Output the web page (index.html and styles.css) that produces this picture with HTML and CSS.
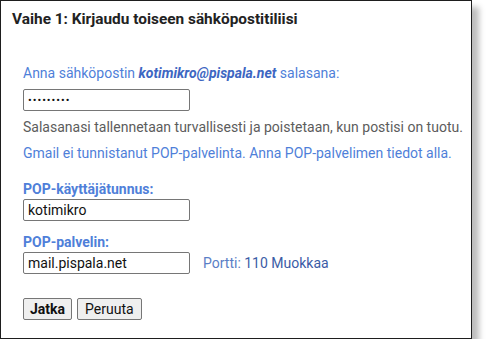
FILE: index.html
```html
<!DOCTYPE html>
<html lang="fi">
<head>
    <meta charset="UTF-8">
    <title>Vaihe 1</title>
    <link rel="stylesheet" href="styles.css">
</head>
<body>
    <div class="panel">
        <h2 class="title">Vaihe 1: Kirjaudu toiseen sähköpostitiliisi</h2>
        <div class="content">
            <p class="info">Anna sähköpostin <b><i>kotimikro@pispala.net</i></b> salasana:</p>
            <input class="field" type="password" value="salasana1">
            <p class="note">Salasanasi tallennetaan turvallisesti ja poistetaan, kun postisi on tuotu.</p>
            <p class="info">Gmail ei tunnistanut POP-palvelinta. Anna POP-palvelimen tiedot alla.</p>

            <label class="label">POP-käyttäjätunnus:</label>
            <input class="field" type="text" value="kotimikro">

            <label class="label">POP-palvelin:</label>
            <div class="row">
                <input class="field" type="text" value="mail.pispala.net">
                <span class="port">Portti: <a href="javascript:;">110 Muokkaa</a></span>
            </div>

            <div class="buttons">
                <button class="btn btn-main">Jatka</button>
                <button class="btn">Peruuta</button>
            </div>
        </div>
    </div>
</body>
</html>
```
FILE: styles.css
```css
* {
    margin: 0;
    padding: 0;
    box-sizing: border-box;
}
body {
    background: #fff;
    font-family: Roboto, "Liberation Sans", sans-serif;
    font-size: 14px;
}
.panel {
    width: 472px;
    height: 339px;
    border: 1px solid #1e1e1e;
    background: #fff;
    box-shadow: 7px 7px 6px #bdbdbd;
}
.title {
    height: 27px;
    padding: 9px 0 0 11px;
    font-size: 15.4px;
    line-height: 18px;
    font-weight: bold;
    color: #222;
}
.content {
    display: flex;
    flex-direction: column;
    align-items: flex-start;
    padding: 37px 0 0 22px;
}
.info {
    color: #4f7fd9;
    line-height: 16px;
}
.info b {
    color: #3d66c2;
}
.content .info + .field {
    margin-top: 8px;
}
.note {
    margin: 8px 0 10px;
    color: #5c5c5c;
    line-height: 16px;
}
.note + .info {
    margin-bottom: 20px;
}
.field {
    width: 167px;
    height: 22px;
    padding: 0 4px;
    border: 1px solid #767676;
    border-radius: 2px;
    font-family: Roboto, "Liberation Sans", sans-serif;
    font-size: 14px;
    color: #111;
}
input[type=password] {
    font-size: 11px;
    letter-spacing: 1px;
}
.label {
    font-weight: bold;
    color: #4f7fd9;
    line-height: 16px;
    margin-bottom: 2px;
}
.field + .label {
    margin-top: 13px;
}
.row {
    display: flex;
    align-items: center;
    gap: 13px;
}
.port {
    color: #5a7ec6;
}
.port a {
    color: #3b5ca6;
    text-decoration: none;
}
.buttons {
    display: flex;
    gap: 5px;
    margin-top: 24px;
}
.btn {
    height: 22px;
    padding: 0 7px;
    border: 1px solid #767676;
    border-radius: 2px;
    background: #efefef;
    font-family: Roboto, "Liberation Sans", sans-serif;
    font-size: 14px;
    color: #111;
}
.btn-main {
    font-weight: bold;
    padding: 0 6px;
}
```
